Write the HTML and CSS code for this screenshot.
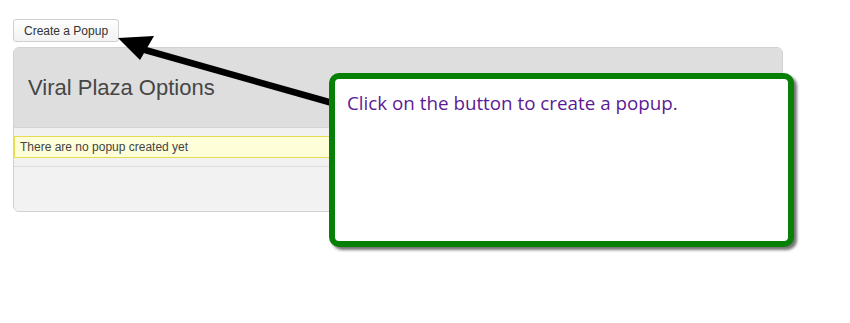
FILE: index.html
```html
<!DOCTYPE html>
<html lang="en">
<head>
    <meta charset="UTF-8">
    <title>Viral Plaza Options</title>
    <link rel="stylesheet" href="styles.css">
</head>
<body>
    <div class="page">
        <button type="button" class="btn">Create a Popup</button>

        <div class="panel">
            <div class="panel-head">
                <h2>Viral Plaza Options</h2>
            </div>
            <div class="panel-body">
                <div class="notice">There are no popup created yet</div>
            </div>
            <div class="panel-foot"></div>
        </div>

        <!-- tutorial overlay: arrow + callout -->
        <svg class="arrow" width="240" height="90" viewBox="0 0 240 90">
            <line x1="18" y1="10" x2="230" y2="70" stroke="#000" stroke-width="6.5" />
            <polygon points="0,0 36,-2 22,22" fill="#000" transform="translate(5 2)" />
        </svg>

        <div class="callout">
            <p>Click on the button to create a popup.</p>
        </div>
    </div>
</body>
</html>
```

FILE: styles.css
```css
:root {
    --panel-border: #d2d2d2;
    --head-bg: #dedede;
    --body-bg: #f1f1f1;
    --text: #464646;
    --green: #068006;
    --purple: #5b1b94;
}

html,
body {
    height: 100%;
}

body {
    margin: 0;
    font-family: "Liberation Sans", Arial, sans-serif;
    color: var(--text);
    background: #fff;
}

.page {
    position: relative;
    min-height: 100%;
    box-sizing: border-box;
    padding: 19px 13px;
}

.btn {
    display: block;
    height: 23px;
    padding: 0 10px;
    font-family: inherit;
    font-size: 12px;
    color: #333;
    background: linear-gradient(#fefefe, #f2f2f2);
    border: 1px solid #cfcfcf;
    border-radius: 3px;
    cursor: pointer;
}

.panel {
    width: 770px;
    margin-top: 5px;
    box-sizing: border-box;
    border: 1px solid var(--panel-border);
    border-radius: 6px;
    background: var(--body-bg);
    overflow: hidden;
}

.panel-head {
    height: 79px;
    background: var(--head-bg);
    border-bottom: 1px solid #d4d4d4;
    display: flex;
    align-items: center;
}

.panel-head h2 {
    margin: 0 0 0 14px;
    font-size: 22px;
    font-weight: normal;
    color: var(--text);
}

.panel-body {
    padding: 8px 0;
    border-bottom: 1px solid #dcdcdc;
}

.notice {
    height: 20px;
    line-height: 20px;
    padding-left: 5px;
    font-size: 12px;
    color: #444;
    background: #fefed9;
    border: 1px solid #e6db55;
}

.panel-foot {
    height: 44px;
    background: #f2f2f2;
}

.arrow {
    position: absolute;
    left: 113px;
    top: 36px;
    overflow: visible;
}

.callout {
    position: absolute;
    left: 329px;
    top: 73px;
    width: 465px;
    height: 174px;
    box-sizing: border-box;
    border: 6px solid var(--green);
    border-radius: 10px;
    background: #fff;
    box-shadow: 3px 3px 3px rgba(0, 0, 0, 0.55);
}

.callout p {
    margin: 11px 0 0 12px;
    font-family: "Open Sans", "Noto Sans", sans-serif;
    font-size: 18.8px;
    color: var(--purple);
}
```
